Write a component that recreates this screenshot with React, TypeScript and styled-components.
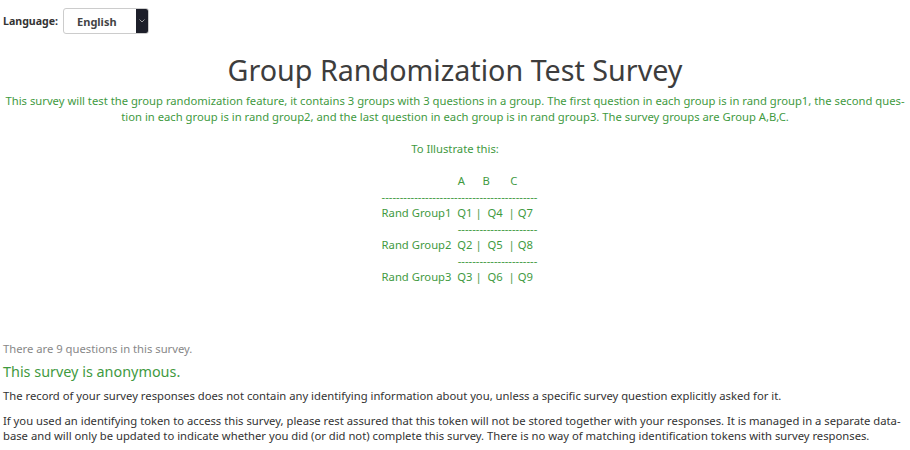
import React from "react";
import styled, { createGlobalStyle } from "styled-components";

const GlobalStyle = createGlobalStyle`
  body {
    margin: 0;
    background: #fff;
    font-family: "Noto Sans", "Open Sans", sans-serif;
  }
`;

const Page = styled.div`
  padding: 0 3px;
  width: 910px;
  box-sizing: border-box;
`;

const LanguageBar = styled.div`
  display: flex;
  align-items: center;
  gap: 5px;
  padding-top: 8px;
  height: 26px;
`;

const LanguageLabel = styled.label`
  font-size: 10.6px;
  font-weight: 700;
  color: #333;
`;

const Select = styled.div`
  display: flex;
  width: 86px;
  height: 26px;
  box-sizing: border-box;
  border: 1px solid #ccc;
  border-radius: 3px;
  overflow: hidden;
  background: #fff;
`;

const SelectValue = styled.span`
  flex: 1;
  display: flex;
  align-items: center;
  padding-left: 13px;
  font-size: 11px;
  font-weight: 700;
  color: #444;
`;

const SelectButton = styled.span`
  width: 12px;
  background: #1d1f2a;
  display: flex;
  align-items: center;
  justify-content: center;
`;

const Title = styled.h1`
  margin: 19px 0 6px;
  text-align: center;
  font-size: 28.7px;
  line-height: 34px;
  font-weight: 400;
  color: #3d3d3d;
`;

const Description = styled.div`
  text-align: center;
  font-size: 11.25px;
  line-height: 16px;
  color: #3f9a3f;
`;

const Line = styled.div<{ $gapBefore?: boolean }>`
  margin-top: ${(p) => (p.$gapBefore ? "16px" : "0")};
`;

const TableWrap = styled.div`
  display: flex;
  justify-content: center;
  margin-top: 16px;
  padding-left: 9px;
`;

const Table = styled.div`
  text-align: left;
  white-space: pre;
`;

const Intro = styled.div`
  margin-top: 56px;
  font-size: 11.25px;
  line-height: 16px;
  color: #888;
`;

const Anonymous = styled.h2`
  margin: 5px 0 6px;
  font-size: 14.4px;
  line-height: 20px;
  font-weight: 400;
  color: #3f9a3f;
`;

const Paragraph = styled.p`
  margin: 0 0 10px;
  font-size: 11.25px;
  line-height: 15px;
  color: #333;
`;

const pad = (n: number) => " ".repeat(n);
const dashes = (n: number) => "-".repeat(n);

const table = [
  pad(26) + "A" + pad(6) + "B" + pad(7) + "C",
  dashes(43),
  "Rand Group1  Q1 |  Q4  | Q7",
  pad(26) + dashes(22),
  "Rand Group2  Q2 |  Q5  | Q8",
  pad(26) + dashes(22),
  "Rand Group3  Q3 |  Q6  | Q9",
];

export default function App() {
  return (
    <Page lang="en">
      <GlobalStyle />
      <LanguageBar>
        <LanguageLabel>Language:</LanguageLabel>
        <Select>
          <SelectValue>English</SelectValue>
          <SelectButton>
            <svg width="6" height="4" viewBox="0 0 6 4">
              <path d="M0.5 0.5 L3 3 L5.5 0.5" stroke="#aaa" strokeWidth="0.9" fill="none" />
            </svg>
          </SelectButton>
        </Select>
      </LanguageBar>
      <Title>Group Randomization Test Survey</Title>
      <Description>
        <Line>
          This survey will test the group randomization feature, it contains 3 groups with 3 questions in a group. The
          first question in each group is in rand group1, the second ques{"\u00AD"}tion in each group is in rand group2,
          and the last question in each group is in rand group3. The survey groups are Group A,B,C.
        </Line>
        <Line $gapBefore>To Illustrate this:</Line>
        <TableWrap>
          <Table>
            {table.map((row, i) => (
              <div key={i}>{row}</div>
            ))}
          </Table>
        </TableWrap>
      </Description>
      <Intro>There are 9 questions in this survey.</Intro>
      <Anonymous>This survey is anonymous.</Anonymous>
      <Paragraph>
        The record of your survey responses does not contain any identifying information about you, unless a specific
        survey question explicitly asked for it.
      </Paragraph>
      <Paragraph>
        If you used an identifying token to access this survey, please rest assured that this token will not be stored
        together with your responses. It is managed in a separate data{"\u00AD"}base and will only be updated to indicate
        whether you did (or did not) complete this survey. There is no way of matching identification tokens with survey
        responses.
      </Paragraph>
    </Page>
  );
}
